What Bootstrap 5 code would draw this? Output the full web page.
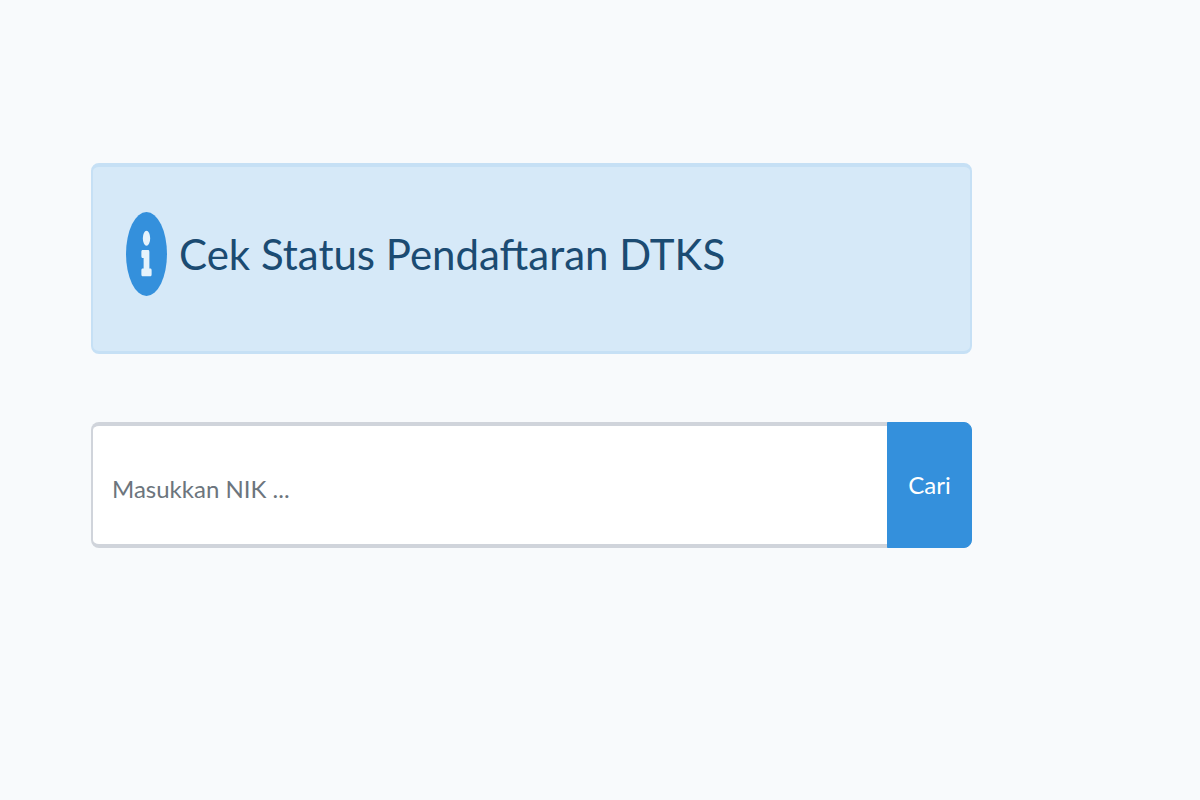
<!DOCTYPE html>
<html lang="id">
<head>
<meta charset="utf-8">
<meta name="viewport" content="width=device-width, initial-scale=1">
<title>Cek Status Pendaftaran DTKS</title>
<link href="https://cdn.jsdelivr.net/npm/bootstrap@5.3.0/dist/css/bootstrap.min.css" rel="stylesheet">
<style>
body { background: #f8fafc; font-family: Lato, sans-serif; }
.status-check { width: 81%; padding: 163px 0 64px 91px; }
.status-alert { background: #d6e9f8; border: 2px solid #c6e0f5; border-top-width: 4px; border-bottom-width: 3px; border-radius: 8px; color: #1b4b72; padding: 45px 33px 55px; margin-bottom: 68px; gap: 12px; }
.status-alert svg { width: 41px; height: 84px; }
.status-title { font-size: 42px; line-height: 84px; }
.nik-input, .nik-input:focus { height: 126px; border: 2px solid #d0d4db; border-width: 4px 2px; border-right-width: 0; border-radius: 8px; background: #fff; padding: 6px 19px 0; font-size: 24px; }
.nik-input::placeholder { color: #6c757d; }
.search-btn { background: #3490dc; border-color: #3490dc; color: #fff; border-radius: 8px; width: 85px; padding: 0; font-size: 24px; }
.search-btn:hover { background: #227dc7; color: #fff; }
</style>
</head>
<body>
<main class="status-check">
  <div class="status-alert d-flex align-items-center">
    <svg class="flex-shrink-0" viewBox="0 0 512 512" preserveAspectRatio="none" aria-hidden="true"><ellipse cx="256" cy="256" rx="256" ry="256" fill="#3490dc"/><path fill="#e6f3fc" d="M256 114a46 46 0 1 1 0 92 46 46 0 0 1 0-92zM320 380c0 7-5 12-12 12H204c-7 0-12-5-12-12v-24c0-7 5-12 12-12h16v-64h-16c-7 0-12-5-12-12v-24c0-7 5-12 12-12h76c7 0 12 5 12 12v100h16c7 0 12 5 12 12z"/></svg>
    <h1 class="status-title fw-normal mb-0">Cek Status Pendaftaran DTKS</h1>
  </div>
  <form class="input-group">
    <input type="text" id="nik" class="form-control nik-input shadow-none" placeholder="Masukkan NIK ..." aria-label="Masukkan NIK">
    <button type="button" class="btn search-btn">Cari</button>
  </form>
</main>
<script src="https://cdn.jsdelivr.net/npm/bootstrap@5.3.0/dist/js/bootstrap.bundle.min.js"></script>
</body>
</html>
